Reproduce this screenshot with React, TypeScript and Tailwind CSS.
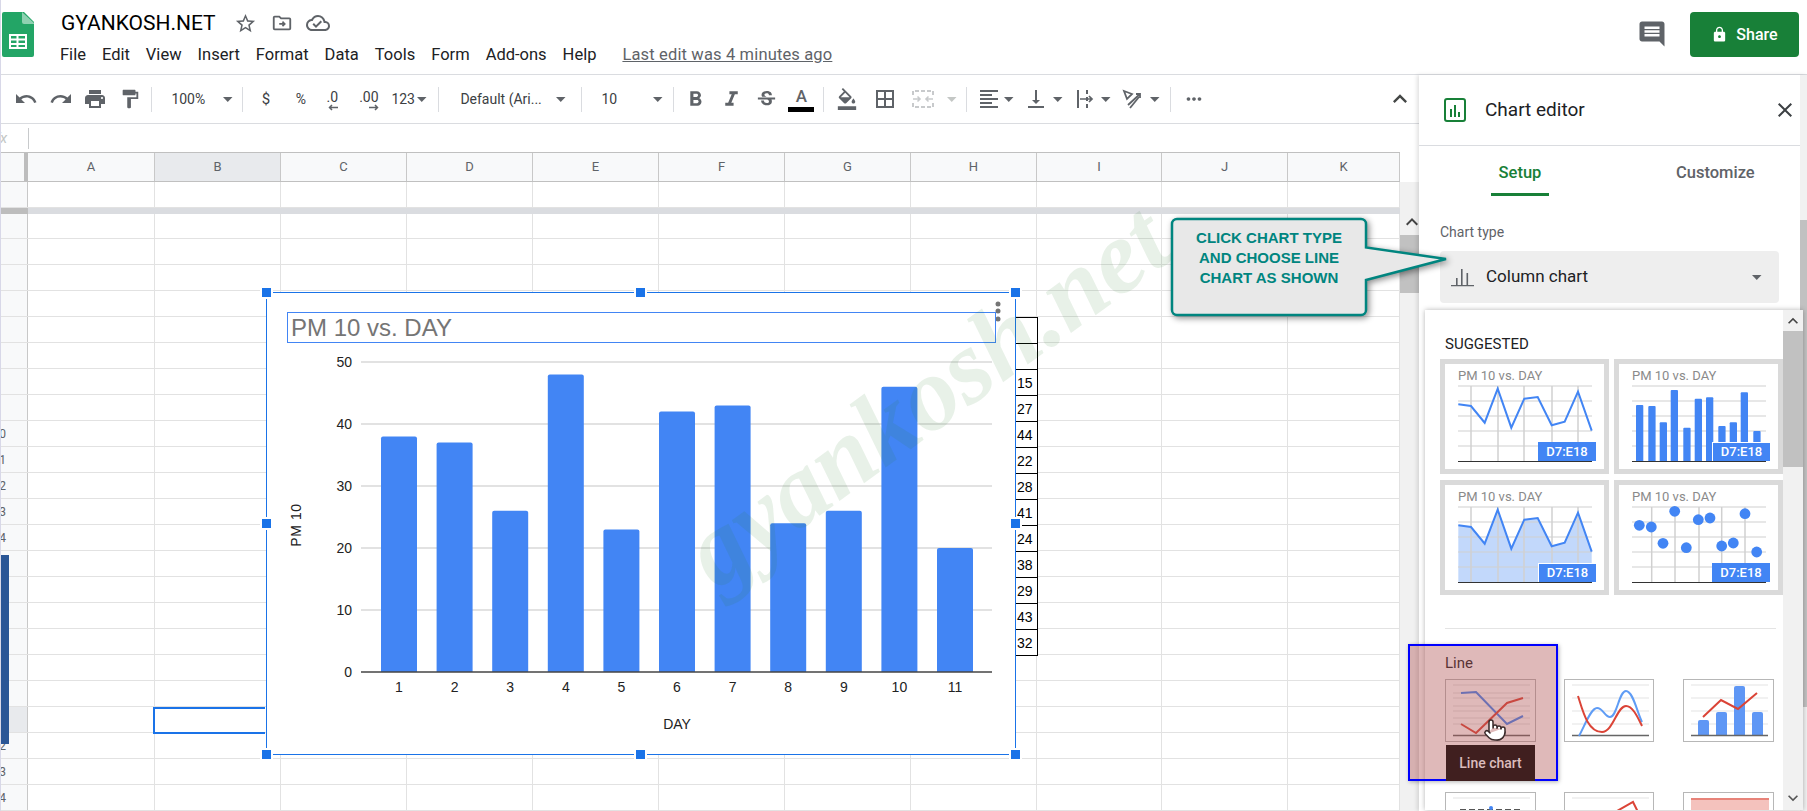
import type { ReactNode } from 'react';
import {
  MdBorderAll,
  MdClose,
  MdComment,
  MdFormatAlignLeft,
  MdFormatBold,
  MdFormatColorFill,
  MdFormatItalic,
  MdFormatPaint,
  MdKeyboardArrowDown,
  MdKeyboardArrowUp,
  MdLock,
  MdMoreHoriz,
  MdOutlineCloudDone,
  MdPrint,
  MdRedo,
  MdStarBorder,
  MdStrikethroughS,
  MdUndo,
  MdVerticalAlignBottom,
} from 'react-icons/md';
import { Pointer } from 'lucide-react';

const MENU = ['File', 'Edit', 'View', 'Insert', 'Format', 'Data', 'Tools', 'Form', 'Add-ons', 'Help'];
const COLS = [
  { name: 'A', w: 'w-[127px]' },
  { name: 'B', w: 'w-[126px]' },
  { name: 'C', w: 'w-[126px]' },
  { name: 'D', w: 'w-[126px]' },
  { name: 'E', w: 'w-[126px]' },
  { name: 'F', w: 'w-[126px]' },
  { name: 'G', w: 'w-[126px]' },
  { name: 'H', w: 'w-[126px]' },
  { name: 'I', w: 'w-[125px]' },
  { name: 'J', w: 'w-[126px]' },
  { name: 'K', w: 'w-[112px]' },
];
const ROWS = Array.from({ length: 23 }, (_, i) => i + 2);
const BARS = [38, 37, 26, 48, 23, 42, 43, 24, 26, 46, 20];
const SHEET_VALUES = ['', '', '15', '27', '44', '22', '28', '41', '24', '38', '29', '43', '32'];

const THUMB_LINE: [number, number][] = [
  [13.3, 40.3], [26, 42], [39.7, 58.7], [52.7, 24.7], [66.3, 63.7], [79.3, 34.7],
  [92.7, 33], [106.7, 61.3], [119.7, 57.7], [133, 27.7], [146.7, 66.7],
];
const THUMB_BARS: [number, number][] = [
  [17, 41], [29.3, 42], [40.7, 58.3], [51.7, 26], [64.3, 63.7], [75.7, 34.7],
  [87, 33.3], [99.3, 62], [110.7, 58.3], [121.7, 28.3], [134.3, 67],
];
const THUMB_DOTS: [number, number][] = [
  [20.3, 40.3], [32.3, 42], [44, 58.3], [55.7, 26.3], [67.3, 62.7], [79.3, 34.7],
  [91, 33], [102.7, 61], [114.3, 58], [126, 28.7], [137.7, 67],
];
const linePoints = THUMB_LINE.map((p) => p.join(',')).join(' ');

function Caret({ light, className = '' }: { light?: boolean; className?: string }) {
  return (
    <svg width="10" height="5" viewBox="0 0 10 5" className={`shrink-0 ${className}`}>
      <path d="M0 0h9.5L4.75 5z" fill={light ? '#c4c7c5' : '#5f6368'} />
    </svg>
  );
}

function Sep() {
  return <div className="mx-[4px] h-[25px] w-px shrink-0 bg-[#dadce0]" />;
}

function Tb({ w, children }: { w: string; children: ReactNode }) {
  return <div className={`flex shrink-0 items-center justify-center ${w}`}>{children}</div>;
}

function SheetsLogo() {
  return (
    <svg width="32" height="45" viewBox="0 0 32 45" className="shrink-0">
      <path d="M2 0h20l10 10v33a2 2 0 0 1-2 2H2a2 2 0 0 1-2-2V2a2 2 0 0 1 2-2z" fill="#23a566" />
      <path d="M20 0l12 11v1H22a2 2 0 0 1-2-2z" fill="#8ed1b1" />
      <path
        d="M7 22h18v15H7zm2 2v2.500h5.500V24zm7.500 0v2.500H23V24zM9 28.500V31h5.500v-2.500zm7.500 0V31H23v-2.500zM9 33v2h5.500v-2zm7.500 0v2H23v-2z"
        fill="#fff"
        fillRule="evenodd"
      />
    </svg>
  );
}

function Header() {
  return (
    <header className="flex h-[75px] shrink-0 border-b border-[#dadce0] pl-[1px]">
      <div className="mt-[12px]">
        <SheetsLogo />
      </div>
      <div className="ml-[27px] flex flex-col">
        <div className="mt-[9px] flex h-[28px] items-center">
          <span className="text-[21px] leading-[28px] text-black">GYANKOSH.NET</span>
          <MdStarBorder className="ml-[18px] text-[#5f6368]" size={23} />
          <svg width="22" height="22" viewBox="0 0 24 24" className="ml-[14px]" fill="none" stroke="#5f6368" strokeWidth="2">
            <path d="M3 6a1 1 0 0 1 1-1h5l2 2h9a1 1 0 0 1 1 1v10a1 1 0 0 1-1 1H4a1 1 0 0 1-1-1z" />
            <path d="M9 13h6M12.500 10.500l2.500 2.500-2.500 2.500" strokeWidth="1.800" />
          </svg>
          <MdOutlineCloudDone className="ml-[13px] text-[#5f6368]" size={24} />
        </div>
        <nav className="mt-[7px] flex h-[22px] items-center text-[16.5px] text-[#202124]">
          {MENU.map((m) => (
            <span key={m} className="mr-[17px] -ml-[1px]">{m}</span>
          ))}
          <span className="ml-[9px] text-[16.5px] tracking-[0.15px] text-[#5f6368] underline">Last edit was 4 minutes ago</span>
        </nav>
      </div>
      <MdComment className="mt-[19px] ml-auto text-[#5f6368]" size={30} />
      <button className="mt-[12px] mr-[8px] ml-[23px] flex h-[45px] w-[109px] items-center justify-center rounded-[4px] bg-[#188038] text-[16px] font-medium text-white">
        <MdLock size={17} className="mr-[8px]" />
        Share
      </button>
    </header>
  );
}

function Toolbar() {
  return (
    <div className="flex h-[49px] shrink-0 items-center border-b border-[#dadce0] pl-[8px] text-[14px] text-[#3c4043]">
      <Tb w="w-[34.600px]"><MdUndo size={24} color="#5f6368" /></Tb>
      <Tb w="w-[34.600px]"><MdRedo size={24} color="#5f6368" /></Tb>
      <Tb w="w-[34.600px]"><MdPrint size={24} color="#5f6368" /></Tb>
      <Tb w="w-[34.600px]"><MdFormatPaint size={22} color="#5f6368" /></Tb>
      <Sep />
      <div className="flex w-[82px] shrink-0 items-center justify-between pr-[5px] pl-[15px]">
        100%
        <Caret />
      </div>
      <Sep />
      <Tb w="w-[37px]"><span className="text-[15px]">$</span></Tb>
      <Tb w="w-[33px]"><span className="text-[14px]">%</span></Tb>
      <Tb w="w-[30px]">
        <div className="flex flex-col items-end pt-[3px] leading-none">
          <span className="text-[14px] leading-[14px]">.0</span>
          <svg width="10" height="7" viewBox="0 0 10 7"><path d="M10 3.500H2M4 1L1.500 3.500 4 6" fill="none" stroke="#5f6368" strokeWidth="1.500" /></svg>
        </div>
      </Tb>
      <Tb w="w-[43px]">
        <div className="flex flex-col items-end pt-[3px] leading-none">
          <span className="text-[14px] leading-[14px]">.00</span>
          <svg width="10" height="7" viewBox="0 0 10 7"><path d="M0 3.500h8M6 1l2.500 2.500L6 6" fill="none" stroke="#5f6368" strokeWidth="1.500" /></svg>
        </div>
      </Tb>
      <div className="flex w-[44px] shrink-0 items-center pl-[1px]">
        123
        <Caret className="ml-[2px]" />
      </div>
      <Sep />
      <div className="flex w-[134px] shrink-0 items-center justify-between pr-[11px] pl-[17px]">
        Default (Ari...
        <Caret />
      </div>
      <Sep />
      <div className="flex w-[82.600px] shrink-0 items-center justify-between pr-[6px] pl-[15px]">
        10
        <Caret />
      </div>
      <Sep />
      <Tb w="w-[36px]"><MdFormatBold size={25} color="#5f6368" /></Tb>
      <Tb w="w-[35px]"><MdFormatItalic size={25} color="#5f6368" /></Tb>
      <Tb w="w-[35px]"><MdStrikethroughS size={23} color="#5f6368" /></Tb>
      <Tb w="w-[35px]">
        <div className="flex flex-col items-center">
          <span className="text-[17px] leading-[20px] font-medium text-[#5f6368]">A</span>
          <div className="mt-[1px] h-[5px] w-[26px] bg-black" />
        </div>
      </Tb>
      <Sep />
      <Tb w="w-[38px]"><MdFormatColorFill size={22} color="#5f6368" /></Tb>
      <Tb w="w-[38px]"><MdBorderAll size={24} color="#5f6368" /></Tb>
      <Tb w="w-[38px]">
        <svg width="22" height="18" viewBox="0 0 22 18" fill="none" stroke="#c8cacc" strokeWidth="2">
          <path d="M1 5V1h20v4M1 13v4h20v-4" strokeDasharray="4 2" />
          <path d="M1 9h7M5.500 6.500L8 9l-2.500 2.500M21 9h-7M16.500 6.500L14 9l2.500 2.500" strokeWidth="1.600" />
        </svg>
      </Tb>
      <Tb w="w-[20px]"><Caret light /></Tb>
      <Sep />
      <div className="ml-[3px] flex w-[30px] justify-center"><MdFormatAlignLeft size={24} color="#5f6368" /></div>
      <Caret />
      <div className="ml-[10px] flex w-[24px] justify-center"><MdVerticalAlignBottom size={24} color="#5f6368" /></div>
      <Caret className="ml-[5px]" />
      <div className="ml-[11px] flex w-[24px] justify-center">
        <svg width="20" height="20" viewBox="0 0 20 20" fill="none" stroke="#5f6368" strokeWidth="2">
          <path d="M2 1v18M11 1v4M11 8v4M11 15v4" />
          <path d="M4 10h12M13 7l3 3-3 3" strokeWidth="1.700" />
        </svg>
      </div>
      <Caret className="ml-[3px]" />
      <div className="ml-[10px] flex w-[24px] justify-center">
        <svg width="22" height="22" viewBox="0 0 22 22" fill="none" stroke="#5f6368" strokeWidth="1.800">
          <path d="M2 3l8 3-5 5zM6 17L18 6M14 6h4v4" />
          <path d="M8 20L17 9" />
        </svg>
      </div>
      <Caret className="ml-[5px]" />
      <div className="mr-[4px] ml-[6px]"><Sep /></div>
      <div className="ml-[3px] flex w-[24px] justify-center"><MdMoreHoriz size={22} color="#5f6368" /></div>
      <MdKeyboardArrowUp size={28} color="#444746" className="mr-[-3px] ml-auto" />
      <div className="w-[8px]" />
    </div>
  );
}

function FormulaBar() {
  return (
    <div className="flex h-[28px] shrink-0 items-center overflow-hidden">
      <span className="-ml-[6px] w-[33px] text-[15px] text-[#c4c7c5] italic">fx</span>
      <div className="h-[21px] w-px bg-[#c8cacc]" />
    </div>
  );
}

function Grid() {
  return (
    <div className="flex min-h-0 flex-1">
      <div className="w-[1399px] shrink-0 overflow-hidden">
        <div className="flex h-[30px] border-y border-[#c0c0c0] bg-[#f8f9fa] text-[13px] text-[#5f6368]">
          <div className="flex w-[27px] shrink-0 justify-end">
            <div className="w-[4px] bg-[#bdbdbd]" />
          </div>
          {COLS.map((c) => (
            <div
              key={c.name}
              className={`flex shrink-0 items-center justify-center border-r border-[#c8c8c8] ${c.w} ${c.name === 'B' ? 'bg-[#e8eaed]' : ''}`}
            >
              {c.name}
            </div>
          ))}
        </div>
        <GridRow h="h-[26px]" />
        <div className="flex h-[6px]">
          <div className="w-[27px] bg-[#bdbdbd]" />
          <div className="flex-1 bg-[#dadce0]" />
        </div>
        {ROWS.map((n, i) => (
          <GridRow key={n} n={n} h={i === 0 ? 'h-[25px]' : 'h-[26px]'} selected={n === 21} />
        ))}
      </div>
      <div className="flex flex-1 flex-col">
        <div className="h-[30px] shrink-0 bg-white" />
        <div className="relative flex flex-1 flex-col bg-[#f1f1f1]">
          <div className="h-[26px]" />
          <div className="flex h-[27px] items-center justify-center bg-[#f1f1f1]">
            <MdKeyboardArrowUp size={24} color="#444" />
          </div>
          <div className="h-[58px] bg-[#c1c1c1]" />
        </div>
      </div>
    </div>
  );
}

function GridRow({ n, h, selected }: { n?: number; h: string; selected?: boolean }) {
  return (
    <div className={`flex border-b border-[#e2e2e2] ${h}`}>
      <div
        className={`flex w-[27px] shrink-0 items-center justify-end overflow-hidden border-r border-[#c8c8c8] pr-[21px] text-[12px] text-[#5f6368] ${selected ? 'bg-[#e8eaed]' : 'bg-[#f8f9fa]'}`}
      >
        {n && n >= 10 ? n : ''}
      </div>
      {COLS.map((c) => (
        <div key={c.name} className={`shrink-0 border-r border-[#e2e2e2] ${c.w}`} />
      ))}
    </div>
  );
}

function Handle({ className }: { className: string }) {
  return <div className={`absolute z-10 h-[9px] w-[9px] bg-[#1a73e8] outline-2 outline-white ${className}`} />;
}

function ChartObject() {
  const ticks = [0, 10, 20, 30, 40, 50];
  return (
    <div className="absolute top-[292px] left-[265px] h-[463px] w-[750px] border border-[#1a73e8] bg-white">
      <Handle className="-top-[5px] -left-[5px]" />
      <Handle className="-top-[5px] left-[369px]" />
      <Handle className="-top-[5px] -right-[5px]" />
      <Handle className="top-[226px] -left-[5px]" />
      <Handle className="top-[226px] -right-[5px]" />
      <Handle className="-bottom-[5px] -left-[5px]" />
      <Handle className="-bottom-[5px] left-[369px]" />
      <Handle className="-right-[5px] -bottom-[5px]" />
      <svg
        viewBox="266 293 748 461"
        width="748"
        height="461"
        className="absolute inset-0 font-['Liberation_Sans',sans-serif]"
      >
        {ticks.map((t) => {
          const y = 672 - t * 6.2;
          return (
            <g key={t}>
              {t > 0 && <line x1="360" x2="991" y1={y} y2={y} stroke="#d9d9d9" strokeWidth="1.500" />}
              <text x="351" y={y + 5} textAnchor="end" fontSize="14" fill="#222">{t}</text>
            </g>
          );
        })}
        {BARS.map((v, i) => {
          const x = 380 + i * 55.6;
          const top = 672 - v * 6.2;
          return (
            <g key={i}>
              <path d={`M${x} 672V${top + 2}a2 2 0 0 1 2-2h32a2 2 0 0 1 2 2V672z`} fill="#4285f4" />
              <text x={x + 18} y="692" textAnchor="middle" fontSize="14" fill="#222">{i + 1}</text>
            </g>
          );
        })}
        <line x1="360" x2="991" y1="672" y2="672" stroke="#444" strokeWidth="1.500" />
        <text x="676" y="729" textAnchor="middle" fontSize="14" fill="#222">DAY</text>
        <text transform="translate(300 525) rotate(-90)" textAnchor="middle" fontSize="14" fill="#222" letterSpacing="0.6">PM 10</text>
        <circle cx="997" cy="304" r="2.500" fill="#757575" />
        <circle cx="997" cy="311" r="2.500" fill="#757575" />
        <circle cx="997" cy="319" r="2.500" fill="#757575" />
      </svg>
      <div className="absolute top-[19px] left-[20px] flex h-[31px] w-[709px] items-center border border-[#4285f4] pl-[3px] font-['Liberation_Sans',sans-serif] text-[24px] text-[#757575]">
        PM 10 vs. DAY
      </div>
    </div>
  );
}

function SheetColumn() {
  return (
    <div className="absolute top-[317px] left-[1015px] w-[22px] border-t border-r border-black bg-white font-['Liberation_Sans',sans-serif] text-[14px] text-black">
      {SHEET_VALUES.map((v, i) => (
        <div key={i} className="h-[26px] border-b border-black pl-[1px] leading-[26px]">{v}</div>
      ))}
    </div>
  );
}

function Badge({ framed }: { framed?: boolean }) {
  return (
    <div
      className={`absolute top-[78px] left-[93px] flex h-[19px] w-[58px] items-center justify-center bg-[#4285f4] text-[13px] font-medium text-white ${framed ? 'border-t border-l border-white' : ''}`}
    >
      D7:E18
    </div>
  );
}

function CardGrid({ xs }: { xs?: number[] }) {
  return (
    <g stroke="#d0d0d0" strokeWidth="1.200">
      {[22, 37, 52, 67, 82].map((y) => (
        <line key={y} x1="13" x2="147" y1={y} y2={y} />
      ))}
      {xs?.map((x) => (
        <line key={x} x1={x} x2={x} y1="22" y2="97" strokeWidth="1.500" />
      ))}
    </g>
  );
}

function SuggestedCard({ children, framed }: { children: ReactNode; framed?: boolean }) {
  return (
    <div className="relative h-[115px] w-[169px] border-[5px] border-[#dadada] bg-white">
      <svg width="159" height="105" viewBox="0 0 159 105" className="absolute inset-0">
        {children}
        <line x1="13" x2="147" y1="97.500" y2="97.500" stroke="#333" strokeWidth="1.200" />
      </svg>
      <div className="absolute top-[4px] left-[13px] text-[13px] leading-[16px] text-[#8a8a8a]">PM 10 vs. DAY</div>
      <Badge framed={framed} />
    </div>
  );
}

function ThumbLines({ ys }: { ys: number[] }) {
  return (
    <g stroke="#ececec" strokeWidth="1.500">
      {ys.map((y) => (
        <line key={y} x1="7" x2="84" y1={y} y2={y} />
      ))}
    </g>
  );
}

function Thumb({ children, w = 'w-[91px]' }: { children: ReactNode; w?: string }) {
  return (
    <div className={`h-[63px] overflow-hidden border border-[#b7b7b7] bg-white ${w}`}>
      <svg width="89" height="61" viewBox="0 0 89 61">{children}</svg>
    </div>
  );
}

function ChartPicker() {
  return (
    <div className="absolute top-[235px] left-[6px] flex h-[500px] w-[378px] bg-white shadow-[0_0_5px_rgba(0,0,0,0.3)]">
      <div className="min-w-0 flex-1 overflow-hidden">
        <div className="mt-[25px] ml-[20px] h-[18px] text-[15px] leading-[18px] text-[#202124]">SUGGESTED</div>
        <div className="mt-[6px] ml-[15px] grid grid-cols-[169px_169px] gap-x-[5px] gap-y-[6px]">
          <SuggestedCard>
            <CardGrid xs={[26, 53, 79, 107, 133]} />
            <polyline points={linePoints} fill="none" stroke="#4285f4" strokeWidth="2" />
          </SuggestedCard>
          <SuggestedCard framed>
            <CardGrid />
            {THUMB_BARS.map(([x, top]) => (
              <path key={x} d={`M${x} 97V${top + 1}a1 1 0 0 1 1-1h5.300a1 1 0 0 1 1 1V97z`} fill="#4285f4" />
            ))}
          </SuggestedCard>
          <SuggestedCard framed>
            <polygon points={`13.3,97 ${linePoints} 146.7,97`} fill="#4285f4" opacity="0.32" />
            <CardGrid xs={[26, 53, 79, 107, 133]} />
            <polyline points={linePoints} fill="none" stroke="#4285f4" strokeWidth="2" />
          </SuggestedCard>
          <SuggestedCard>
            <CardGrid xs={[32.700, 56, 80, 102.700, 126]} />
            {THUMB_DOTS.map(([x, y]) => (
              <circle key={x} cx={x} cy={y} r="5.400" fill="#4285f4" />
            ))}
          </SuggestedCard>
        </div>
        <div className="mt-[33px] ml-[20px] h-px w-[331px] bg-[#e4e4e4]" />
        <div className="mt-[26px] ml-[20px] h-[17px] text-[15px] leading-[17px] text-[#202124]">Line</div>
        <div className="mt-[7px] ml-[20px] grid grid-cols-[91px_91px_91px] gap-x-[28px] gap-y-[50px]">
          <Thumb>
            <ThumbLines ys={[5, 13, 18, 26, 31, 38, 44]} />
            <line x1="7" x2="84" y1="55.500" y2="55.500" stroke="#666" strokeWidth="1.500" />
            <polyline points="15,13 30,12 61,44 77,36" fill="none" stroke="#4285f4" strokeWidth="2" />
            <polyline points="15,44 30,53 61,23 77,18" fill="none" stroke="#db4437" strokeWidth="2" />
          </Thumb>
          <Thumb w="w-[90px]">
            <ThumbLines ys={[5, 18, 31, 44]} />
            <line x1="7" x2="84" y1="55.500" y2="55.500" stroke="#666" strokeWidth="1.500" />
            <path d="M14 56C20 45 26 28 32 28C38 28 40 37 45 37C52 37 54 11 61 11C68 11 72 32 77 42" fill="none" stroke="#5f9cf5" strokeWidth="2" />
            <path d="M13 16C17 28 22 52 37 52C48 52 52 26 61 26C68 26 73 38 77 46" fill="none" stroke="#db4437" strokeWidth="2" />
          </Thumb>
          <Thumb>
            <ThumbLines ys={[5, 18, 31, 44]} />
            {[[14, 40], [32, 32], [50, 6], [68, 32]].map(([x, top]) => (
              <path key={x} d={`M${x} 56V${top + 2}a2 2 0 0 1 2-2h7a2 2 0 0 1 2 2V56z`} fill="#5f97f5" />
            ))}
            <line x1="7" x2="84" y1="55.500" y2="55.500" stroke="#666" strokeWidth="1.500" />
            <polyline points="19,37 37,20 54,29 73,13" fill="none" stroke="#db4437" strokeWidth="2" />
          </Thumb>
          <Thumb>
            <ThumbLines ys={[5]} />
            <path d="M14 17h60" stroke="#555" strokeWidth="2" strokeDasharray="6 3" />
            <circle cx="45" cy="15" r="2" fill="#4285f4" />
          </Thumb>
          <Thumb w="w-[90px]">
            <ThumbLines ys={[5]} />
            <path d="M52 18L68 9l5 10" fill="none" stroke="#db4437" strokeWidth="2" />
          </Thumb>
          <Thumb>
            <rect x="7" y="5" width="78" height="56" fill="#f4c2bd" />
            <line x1="7" x2="85" y1="6" y2="6" stroke="#db4437" strokeWidth="1" />
          </Thumb>
        </div>
      </div>
      <div className="flex w-[20px] shrink-0 flex-col bg-[#f1f1f1]">
        <div className="flex h-[21px] items-center justify-center">
          <MdKeyboardArrowUp size={22} color="#444" />
        </div>
        <div className="h-[136px] bg-[#c1c1c1]" />
        <div className="mt-auto flex h-[24px] items-center justify-center">
          <MdKeyboardArrowDown size={24} color="#555" />
        </div>
      </div>
    </div>
  );
}

function ChartEditor() {
  return (
    <aside className="relative flex min-w-0 flex-1 shadow-[-2px_0_4px_rgba(0,0,0,0.12)]">
      <div className="flex w-[381px] shrink-0 flex-col bg-white">
        <div className="flex h-[71px] shrink-0 items-center border-b border-[#dadce0] pl-[25px]">
          <svg width="22" height="24" viewBox="0 0 22 24" className="shrink-0">
            <rect x="1" y="1" width="20" height="22" rx="2" fill="none" stroke="#188038" strokeWidth="2" />
            <path d="M6 11h2v8H6zM10 7h2v12h-2zM14 14h2v5h-2z" fill="#188038" />
          </svg>
          <span className="ml-[19px] text-[19px] text-[#202124]">Chart editor</span>
          <MdClose size={24} color="#3c4043" className="mr-[3px] ml-auto" />
          <div className="w-[0px]" />
        </div>
        <div className="flex h-[50px] shrink-0 items-end text-[16.500px] font-medium">
          <div className="ml-[72px] h-[36px] w-[58px] border-b-[3px] border-[#188038] text-center leading-[26px] text-[#188038]">Setup</div>
          <div className="ml-[127px] h-[36px] leading-[26px] whitespace-nowrap text-[#5f6368]">Customize</div>
        </div>
        <div className="mt-[27px] ml-[21px] text-[14px] leading-[18px] text-[#5f6368]">Chart type</div>
        <div className="mt-[10px] ml-[21px] flex h-[52px] w-[339px] items-center rounded-[4px] bg-[#eeeeee] pr-[17px] pl-[11px]">
          <svg width="24" height="20" viewBox="0 0 24 20" fill="#5f6368">
            <path d="M0 18h23v1.200H0zM5 11h1.600v7H5zM10 2h1.600v16H10zM15.500 6h1.600v12h-1.600z" />
          </svg>
          <span className="ml-[11px] text-[17px] text-[#202124]">Column chart</span>
          <Caret className="ml-auto" />
        </div>
      </div>
      <div className="flex flex-1 flex-col bg-[#f1f1f1]">
        <div className="h-[145px]" />
        <div className="h-[487px] bg-[#c1c1c1]" />
      </div>
      <ChartPicker />
    </aside>
  );
}

function Callout() {
  return (
    <div className="absolute top-[217px] left-[1169px] h-[100px] w-[280px]">
      <svg width="280" height="100" viewBox="0 0 280 100" className="absolute inset-0 overflow-visible">
        <path
          d="M7 2h184a5 5 0 0 1 5 5v23.500L276 42 196 63v30a5 5 0 0 1-5 5H7a5 5 0 0 1-5-5V7a5 5 0 0 1 5-5z"
          fill="#e8e8e8"
          stroke="#00857f"
          strokeWidth="2.500"
          style={{ filter: 'drop-shadow(2px 2px 3px rgba(0,0,0,0.45))' }}
        />
      </svg>
      <div className="absolute top-[11px] left-[2px] w-[194px] text-center font-['Liberation_Sans',sans-serif] text-[15px] leading-[20px] font-bold text-[#00857f]">
        CLICK CHART TYPE
        <br />
        AND CHOOSE LINE
        <br />
        CHART AS SHOWN
      </div>
    </div>
  );
}

function Highlight() {
  return (
    <div className="absolute top-[644px] left-[1407px] h-[137px] w-[150px] border-2 border-[#0000ff] bg-[rgba(175,80,80,0.4)] shadow-[1px_1px_4px_rgba(0,0,0,0.3)]">
      <div className="absolute top-[99px] left-[36px] flex h-[36px] w-[89px] items-center justify-center bg-[#401f1f] text-[14px] font-medium text-[#dcbcbc]">
        Line chart
      </div>
      <Pointer size={24} fill="#fff" color="#3a2a2a" strokeWidth={1.500} className="absolute top-[72px] left-[73px]" />
    </div>
  );
}

export default function App() {
  return (
    <div className="relative h-[811px] w-[1807px] overflow-hidden border-l border-[#d8d8e8] bg-white font-['Roboto','Liberation_Sans',sans-serif]">
      <Header />
      <div className="flex h-[736px]">
        <div className="flex w-[1418px] shrink-0 flex-col">
          <Toolbar />
          <FormulaBar />
          <Grid />
        </div>
        <ChartEditor />
      </div>
      <div className="absolute top-[555px] left-0 h-[189px] w-[8px] bg-[#2a5696]" />
      <div className="absolute top-[707px] left-[152px] h-[27px] w-[112px] border-y-2 border-l-2 border-[#1a73e8]" />
      <ChartObject />
      <SheetColumn />
      <div className="pointer-events-none absolute top-[335px] left-[625px] w-[600px] rotate-[-36deg] text-center font-['Liberation_Serif',serif] text-[104px] leading-[120px] font-bold whitespace-nowrap text-[rgba(46,125,50,0.11)] italic">
        gyankosh.net
      </div>
      <Callout />
      <Highlight />
    </div>
  );
}
